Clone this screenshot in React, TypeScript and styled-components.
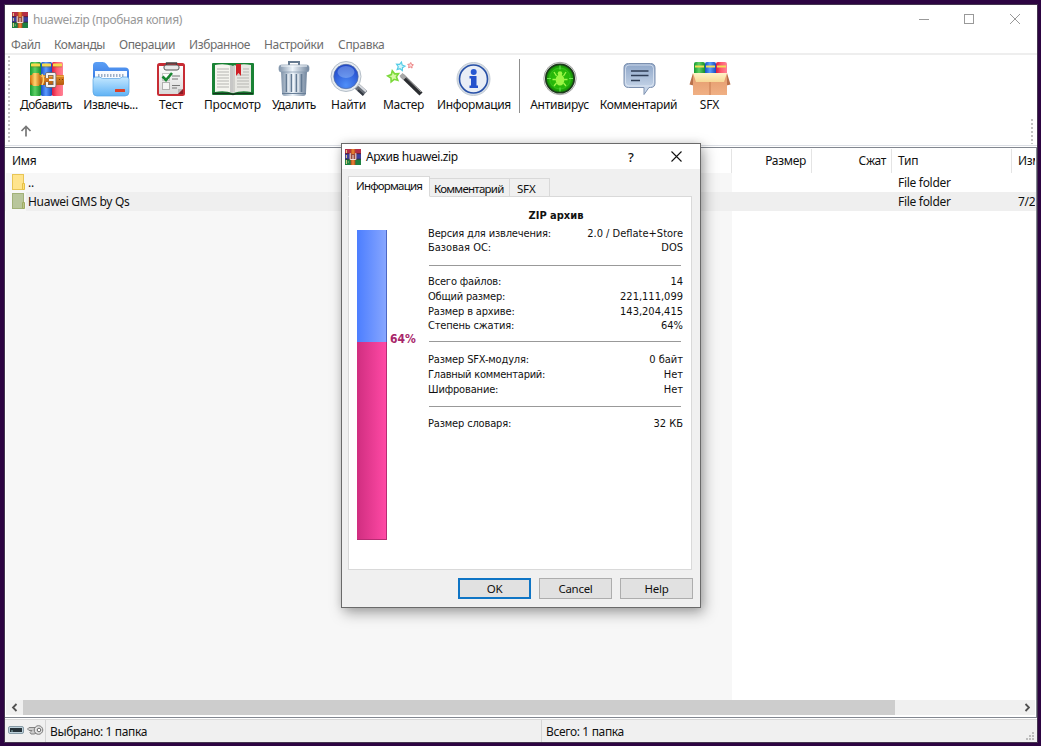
import React from "react";
import styled, { createGlobalStyle } from "styled-components";

const Global = createGlobalStyle`
  * { box-sizing: border-box; }
  html, body { margin: 0; padding: 0; }
  body { background: #2d0442; overflow: hidden; }
  svg { display: block; flex: none; }
`;

const Desktop = styled.div`
  position: relative;
  width: 1041px;
  height: 746px;
  padding: 4px 3px 3px 4px;
  background: #2d0442;
  overflow: hidden;
  font: 12px/16px "Noto Sans", sans-serif;
  color: #111;
`;

const Window = styled.div`
  width: 1034px;
  height: 739px;
  border: 1px solid #43344e;
  background: #fff;
  display: flex;
  flex-direction: column;
  overflow: hidden;
`;

const Text = styled.span<{ $t?: number }>`
  white-space: pre;
  letter-spacing: ${(p) => p.$t ?? 0}px;
`;

const TitleBar = styled.div`
  height: 28px;
  flex: none;
  display: flex;
  align-items: center;
  padding: 1px 16px 0 7px;
  color: #999;
`;

const TitleText = styled(Text)`
  margin-left: 5px;
  flex: 1;
`;

const Controls = styled.div`
  display: flex;
  gap: 35px;
  padding-bottom: 1px;
  & > :last-child { margin-left: -1px; }
`;

const MenuBar = styled.div`
  height: 22px;
  flex: none;
  display: flex;
  padding: 4px 0 0 6px;
  color: #6d6d6d;
  border-bottom: 2px solid #eee;
`;

const MenuItem = styled.div<{ $w: number }>`
  width: ${(p) => p.$w}px;
  line-height: 16px;
`;

const ToolArea = styled.div`
  flex: none;
  height: 91px;
  display: flex;
  border-bottom: 1px solid #dcdfe5;
`;

const Grip = styled.div<{ $top?: number }>`
  width: 2px;
  flex: none;
  margin: ${(p) => p.$top ?? 1}px 4px 1px 3px;
  background: repeating-linear-gradient(#c3c3c3 0 2px, transparent 2px 4px);
`;

const ToolRows = styled.div`
  flex: 1;
  display: flex;
  flex-direction: column;
`;

const Tools = styled.div`
  display: flex;
  height: 63px;
  padding-top: 6px;
`;

const Tool = styled.div<{ $w: number }>`
  width: ${(p) => p.$w}px;
  flex: none;
  display: flex;
  flex-direction: column;
  align-items: center;
  line-height: 16px;
`;

const ToolLabel = styled(Text)`
  margin-top: 0;
`;

const Divider = styled.div`
  width: 1px;
  height: 54px;
  margin: -2px 3px 0;
  background: #8f8f8f;
`;

const PathRow = styled.div`
  padding: 7px 0 0 6px;
`;

const List = styled.div`
  flex: 1;
  display: flex;
  flex-direction: column;
  border: 1px solid #828790;
  border-width: 1px 1px 1px 0;
  margin-top: 1px;
`;

const cols = "727px 80px 80px 120px 1fr";

const ListHead = styled.div`
  display: grid;
  grid-template-columns: ${cols};
  height: 25px;
  overflow: hidden;
  letter-spacing: -0.3px;
`;

const HeadCell = styled.div<{ $right?: boolean; $first?: boolean }>`
  height: 24px;
  margin-top: 1px;
  padding: 4px 5px 0 ${(p) => (p.$first ? 7 : 6)}px;
  text-align: ${(p) => (p.$right ? "right" : "left")};
  border-right: 1px solid #e4e4e4;
  white-space: nowrap;
  overflow: hidden;
  &:last-child { border-right: 0; padding-right: 0; margin-right: 1px; }
`;

const ListBody = styled.div`
  flex: 1;
  background: linear-gradient(90deg, #fff 1px, #f7f7f7 1px 727px, #fff 727px);
  letter-spacing: -0.3px;
`;

const Row = styled.div<{ $selected?: boolean }>`
  display: grid;
  grid-template-columns: ${cols};
  height: 19px;
  line-height: 19px;
  background: ${(p) =>
    p.$selected ? "linear-gradient(90deg, #f7f7f7 21px, #efefef 21px)" : "none"};
`;

const Cell = styled.div<{ $name?: boolean }>`
  display: flex;
  padding-left: ${(p) => (p.$name ? 7 : 6)}px;
  gap: 3px;
  overflow: hidden;
  white-space: nowrap;
  &:last-child { margin-right: 1px; }
`;

const ScrollBar = styled.div`
  height: 15px;
  margin: 0 1px 2px 1px;
  display: flex;
  background: #f0f0f0;
`;

const ScrollButton = styled.div`
  width: 17px;
  display: flex;
  align-items: center;
  justify-content: center;
`;

const Track = styled.div`
  flex: 1;
`;

const Thumb = styled.div`
  width: 872px;
  height: 15px;
  background: #cdcdcd;
`;

const Status = styled.div`
  height: 23px;
  flex: none;
  margin-top: 1px;
  border-top: 1px solid #d9d9d9;
  background: #f0f0f0;
  display: flex;
  align-items: stretch;
`;

const StatusIcons = styled.div`
  width: 41px;
  padding: 3px 0 0 3px;
  border-right: 1px solid #d5d5d5;
  display: flex;
  gap: 3px;
`;

const StatusCell = styled.div<{ $w?: number }>`
  width: ${(p) => (p.$w ? `${p.$w}px` : "auto")};
  flex: ${(p) => (p.$w ? "none" : 1)};
  padding: 4px 0 0 4px;
  border-right: ${(p) => (p.$w ? "1px solid #d5d5d5" : "0")};
`;

const Corner = styled.div`
  align-self: flex-end;
  padding: 0 3px 2px;
`;

const Dialog = styled.div`
  position: absolute;
  left: 341px;
  top: 143px;
  width: 360px;
  height: 465px;
  border: 1px solid #6a6a6a;
  background: #f0f0f0;
  box-shadow: 3px 5px 13px rgba(0, 0, 0, 0.34), 0 0 8px rgba(0, 0, 0, 0.1);
  display: flex;
  flex-direction: column;
`;

const DialogTitle = styled.div`
  height: 25px;
  flex: none;
  background: #fff;
  display: flex;
  align-items: center;
  padding: 0 18px 0 3px;
`;

const Question = styled.span`
  width: 43px;
  font-size: 13px;
  font-weight: 500;
`;

const Tabs = styled.div`
  display: flex;
  align-items: flex-end;
  height: 28px;
  padding-left: 6px;
  position: relative;
  margin-bottom: -1px;
`;

const Tab = styled.div<{ $w: number; $active?: boolean }>`
  width: ${(p) => p.$w}px;
  height: ${(p) => (p.$active ? 21 : 19)}px;
  padding: ${(p) => (p.$active ? 1 : 2)}px 0 0 ${(p) => (p.$active ? 7 : 4)}px;
  border: 1px solid #d9d9d9;
  border-left-width: ${(p) => (p.$active ? 1 : 0)}px;
  border-bottom-color: ${(p) => (p.$active ? "#fff" : "#d9d9d9")};
  background: ${(p) => (p.$active ? "#fff" : "#f0f0f0")};
  font-size: 11.5px;
  line-height: 16px;
`;

const Pane = styled.div`
  width: 344px;
  height: 374px;
  margin-left: 6px;
  border: 1px solid #d9d9d9;
  background: #fff;
  display: flex;
  font: 11px/15px "DejaVu Sans Condensed", "DejaVu Sans", sans-serif;
`;

const Gauge = styled.div`
  width: 30px;
  height: 310px;
  margin: 33px 0 0 8px;
`;

const Saved = styled.div`
  height: 112px;
  background: linear-gradient(90deg, #4c7eff, #87a6ff);
  border-right: 1px solid #4d67c4;
`;

const Packed = styled.div`
  height: 198px;
  background: linear-gradient(90deg, #d02e80, #ff49a5);
  border-right: 1px solid #b72c73;
  border-bottom: 1px solid #b72c73;
`;

const Percent = styled.div`
  width: 42px;
  padding: 135px 0 0 3px;
  color: #a8266a;
  font-weight: bold;
  font-size: 12px;
`;

const Details = styled.div`
  width: 254px;
  padding-top: 11px;
`;

const Heading = styled.div`
  text-align: center;
  font-weight: bold;
  height: 18px;
`;

const Info = styled.div<{ $h?: number }>`
  display: flex;
  justify-content: space-between;
  height: ${(p) => p.$h ?? 15}px;
  line-height: 15px;
  margin-left: -1px;
`;

const Rule = styled.div<{ $before: number; $after: number }>`
  height: 1px;
  width: 252px;
  margin: ${(p) => p.$before}px 0 ${(p) => p.$after}px;
  background: #999;
`;

const Buttons = styled.div`
  display: flex;
  gap: 8px;
  justify-content: flex-end;
  padding: 8px 7px 0 0;
`;

const Button = styled.button<{ $primary?: boolean }>`
  width: 73px;
  height: 21px;
  padding: 0;
  border: ${(p) => (p.$primary ? "2px solid #0f75c5" : "1px solid #adadad")};
  background: #e1e1e1;
  font: 11.5px/15px "Noto Sans", sans-serif;
  letter-spacing: -0.3px;
  color: #111;
`;

const Logo = () => (
  <svg width="16" height="16" viewBox="0 0 17 16" preserveAspectRatio="none">
    <rect x="0" y="0" width="17" height="5" fill="#b52d45" />
    <rect x="0" y="5" width="17" height="5" fill="#3d3f9c" />
    <rect x="0" y="10" width="17" height="6" fill="#1c8141" />
    <path d="M0 4.7h17M0 10.2h17" stroke="#391b39" strokeWidth=".8" />
    <path d="M1.5 1v3M1.5 6v3M1.5 11v4M3 13h1" stroke="#e9d78b" />
    <rect x="6" y="0" width="5" height="16" fill="#b44b22" />
    <rect x="7" y="0" width="3" height="16" fill="#e37a30" />
    <rect x="5" y="5" width="7" height="6" fill="#9a4a3d" />
    <path d="M5.500 4v6.500h6V4M8.500 6v4" stroke="#f4e6e2" fill="none" />
  </svg>
);

const Gradients = () => (
  <svg width="0" height="0">
    <defs>
      {[
        ["green", "#159a31", "#5fd064", "#168d2b"],
        ["blue", "#1750c2", "#5b9bff", "#174bbc"],
        ["red", "#d81a42", "#ff5b70", "#ff8296"],
        ["steel", "#8194aa", "#eef5fb", "#71859d"],
        ["belt", "#d9780e", "#ffd572", "#c8690c"],
      ].map(([id, a, b, c]) => (
        <linearGradient id={id} key={id}>
          <stop offset="0" stopColor={a} /><stop offset=".45" stopColor={b} /><stop offset="1" stopColor={c} />
        </linearGradient>
      ))}
      {[
        ["strap", "#e08a28", "#b55a0d"],
        ["folder", "#c4e8ff", "#5fb2f5"],
        ["back", "#5b9ff5", "#1f5fd6"],
        ["comment", "#8ea6c8", "#d3e0f0"],
        ["paper", "#ffffff", "#d9d9d9"],
        ["box", "#e39a6c", "#f0b084"],
        ["flap", "#fff3c8", "#f7d795"],
      ].map(([id, a, b]) => (
        <linearGradient id={id} key={id} x1="0" y1="0" x2="0" y2="1">
          <stop stopColor={a} /><stop offset="1" stopColor={b} />
        </linearGradient>
      ))}
      <radialGradient id="lens" cx=".5" cy=".85" r=".9">
        <stop stopColor="#4f8ff8" /><stop offset="1" stopColor="#1b3fc4" />
      </radialGradient>
      <radialGradient id="radar">
        <stop stopColor="#2fc40c" /><stop offset=".7" stopColor="#25b508" /><stop offset="1" stopColor="#0f8106" />
      </radialGradient>
    </defs>
  </svg>
);

const Icon = ({ children }: { children: React.ReactNode }) => (
  <svg width="42" height="36" viewBox="0 0 42 36">{children}</svg>
);

const AddIcon = () => (
  <Icon>
    {["green", "blue", "red"].map((c, i) => (
      <g key={c} transform={`translate(${5 + i * 11} 1)`}>
        <rect width="11" height="34" rx="1.5" fill={`url(#${c})`} />
        <rect x="1" y="1.500" width="9" height="3" rx=".5" fill="#f5d94d" />
        <path d="M1 4.900h9" stroke="#7c6a10" strokeOpacity=".6" strokeWidth=".7" />
      </g>
    ))}
    <rect x="5" y="14" width="34" height="10" rx="1" fill="url(#strap)" />
    <path d="M16 15.500h23" stroke="#f1a94b" />
    <path d="M8 12h6q3 6.500 0 13H8q-5-6.500 0-13z" fill="url(#belt)" />
    <path d="M17 13q3 5.500 0 11" fill="none" stroke="#ffd26d" strokeWidth="1.500" />
    <path d="M22 17v-4h7.500v12H22v-4" fill="none" stroke="#6f6a66" strokeWidth="3.600" strokeLinejoin="round" />
    <path d="M22 17v-4h7.500v12H22v-4M24 19h5" fill="none" stroke="#f4f1ee" strokeWidth="2" strokeLinejoin="round" />
    <path d="M34 18.500h1M37 18.500h1" stroke="#6e3b0c" />
  </Icon>
);

const ExtractIcon = () => (
  <Icon>
    <path d="M3 30V4.500q0-3.500 3.500-3.500h6q2.500 0 4 2l2.500 3.500h16q4 0 4 4V30z" fill="url(#back)" />
    <path d="M5 10h32v9H5z" fill="#f8fbff" />
    <path d="M8 14.500h27" stroke="#9fb0c6" strokeWidth="3" strokeDasharray="1.500 1.500" />
    <path d="M3 18.500q0-2.500 2.500-2.500h4l3 1.500h17l3-1.500h4q2.500 0 2.500 2.500V31q0 4-4 4H7q-4 0-4-4z" fill="url(#folder)" stroke="#58a4e3" strokeWidth=".7" />
    <rect x="25" y="28" width="10" height="3" rx=".5" fill="#dc4128" />
  </Icon>
);

const TestIcon = () => (
  <Icon>
    <rect x="7" y="2" width="28" height="33" rx="2.5" fill="#c72c34" />
    <path d="M9 5h24v23l-5 5H9z" fill="url(#paper)" />
    <path d="M33 28h-5v5z" fill="#b9b9b9" /><path d="M33 28v5h-5z" fill="#8b1d27" />
    <rect x="14" y="4" width="15" height="5" rx="2" fill="#e9e9e9" stroke="#555" />
    <path d="M16.500 4V2h10v2" fill="none" stroke="#444" strokeWidth="1.300" />
    <rect x="12.5" y="12.5" width="7" height="7" fill="#fff" stroke="#c5c5c5" />
    <rect x="12.5" y="21.5" width="7" height="7" fill="#f5f5f5" stroke="#b0b0b0" />
    <path d="M12.500 15.500l3.500 3.500 6-7" stroke="#198632" strokeWidth="2.600" fill="none" />
    <path d="M22 15h8M22 18h6M22 24.5h8M22 27h5" stroke="#777" />
  </Icon>
);

const ViewIcon = () => (
  <Icon>
    <rect x="0" y="2" width="42" height="32" rx="1" fill="#198234" />
    <path d="M1 32.500h17l3 1 3-1h17" stroke="#16351e" strokeWidth="1.500" fill="none" />
    <path d="M3 4q9-2 18 1v27q-9-3-18-1z" fill="#f5f5ef" />
    <path d="M39 4q-9-2-18 1v27q9-3 18-1z" fill="#e8e8e3" />
    <path d="M18 4l3 1v27l-3-1z" fill="#bbb" opacity=".8" /><path d="M21 5l2-1v27l-2 1z" fill="#cfcfcb" />
    <path d="M5 8h12M5 11h12M5 14h12M5 17h12M5 20h12M5 23h12M5 26h12M31 8h6M31 11h6M25 14h12M25 17h12M25 20h12M25 23h12M25 26h12" stroke="#b5b5b1" />
    <path d="M24 3h5v12l-2.5-3-2.5 3z" fill="#ce2026" />
  </Icon>
);

const DeleteIcon = () => (
  <Icon>
    <path d="M16 4V1h10v3" stroke="#667b91" strokeWidth="2" fill="none" />
    <path d="M8 10h26l-1 22q0 3-3 3H12q-3 0-3-3z" fill="url(#steel)" />
    <path d="M13.5 13v18M18.5 13v18M23.5 13v18M28.5 13v18" stroke="#637a93" strokeWidth="1.700" />
    <path d="M15 13v18M20 13v18M25 13v18" stroke="#f7fbff" />
    <rect x="6" y="4" width="30" height="7" rx="2.5" fill="url(#steel)" stroke="#8397ac" strokeWidth=".7" />
    <path d="M8 5h26" stroke="#f6fafd" /><path d="M9 32.5h24" stroke="#687f98" />
  </Icon>
);

const FindIcon = () => (
  <Icon>
    <path d="M27 23.500l10 9" stroke="#686e77" strokeWidth="6.500" />
    <path d="M29 22.500l9 8" stroke="#d8dce2" strokeWidth="2" />
    <path d="M30 29l5.500 5" stroke="#343a43" strokeWidth="2" />
    <circle cx="18" cy="15.500" r="15" fill="#e6ebf0" stroke="#b4bec8" />
    <circle cx="18" cy="15.500" r="12.200" fill="url(#lens)" stroke="#536d9d" strokeWidth=".7" />
    <ellipse cx="18" cy="11" rx="8.500" ry="6" fill="#bdd9ff" opacity=".35" />
  </Icon>
);

const star = (cx: number, cy: number, r: number, turn: number) =>
  Array.from({ length: 10 }, (_, i) => {
    const a = ((i * 36 + turn - 90) * Math.PI) / 180;
    const q = i % 2 ? r * 0.5 : r;
    return `${(cx + q * Math.cos(a)).toFixed(2)},${(cy + q * Math.sin(a)).toFixed(2)}`;
  }).join(" ");

const WizardIcon = () => (
  <Icon>
    <path d="M19 14.500L38 33" stroke="#2b2d31" strokeWidth="4.500" />
    <path d="M19.500 13L38 31" stroke="#9a9a9a" />
    <path d="M18 13.500l4 4" stroke="#a8a8a8" strokeWidth="4.500" />
    <polygon points={star(17.500, 5.500, 4.500, 12)} fill="#d4f6fb" stroke="#55cce6" strokeWidth="1.200" />
    <polygon points={star(10.500, 15.500, 5.800, -12)} fill="#d6f9a5" stroke="#7bd93a" strokeWidth="1.600" />
    <polygon points={star(27.500, 4.500, 3, 5)} fill="#ffd9d9" stroke="#ec8686" />
  </Icon>
);

const InfoIcon = () => (
  <Icon>
    <circle cx="20.5" cy="18" r="16.5" fill="#d7dee6" stroke="#c3ccd5" />
    <circle cx="20.5" cy="18" r="14" fill="#e9eef6" stroke="#2750a7" strokeWidth="1.600" />
    <circle cx="20.7" cy="11" r="3" fill="#2859d2" />
    <path d="M16.5 15h7v9.5H25V27h-8.500v-2.500h1.500v-7h-1.500z" fill="#2552cc" />
  </Icon>
);

const VirusIcon = () => (
  <Icon>
    <circle cx="21" cy="17.500" r="16.200" fill="#ededed" stroke="#a5a5a5" />
    <circle cx="21" cy="17.500" r="14.200" fill="url(#radar)" stroke="#1c3a1b" strokeWidth="1.700" />
    <circle cx="21" cy="17.500" r="10.500" fill="none" stroke="#52da3a" strokeOpacity=".45" strokeWidth=".8" />
    <path d="M21 4.500v4M21 26.500v4M8 17.500h4M30 17.500h4" stroke="#6de653" />
    <path d="M15 11l2.500 4M27 11l-2.500 4M13.500 18.500h4M28.500 18.500h-4M15 25l2.500-3M27 25l-2.500-3" stroke="#9df748" strokeWidth="1.300" />
    <ellipse cx="21" cy="19" rx="4.300" ry="5.500" fill="#9bf545" /><circle cx="21" cy="12.500" r="2.300" fill="#9bf545" />
  </Icon>
);

const CommentIcon = () => (
  <Icon>
    <path d="M10.500 2.500h22q4.500 0 4.500 4.500v15q0 4.500-4.500 4.500H31l-5 7v-7H10.500Q6 26.500 6 22V7q0-4.500 4.500-4.500z" fill="url(#comment)" stroke="#7c90af" />
    <rect x="7.500" y="4" width="28" height="21" rx="3.500" fill="none" stroke="#eef4fc" strokeOpacity=".6" />
    <path d="M13 10h17.500M13 14.500h17.500M13 19.500h9" stroke="#2f3e56" strokeWidth="1.500" />
  </Icon>
);

const SfxIcon = () => (
  <Icon>
    {["green", "blue", "red"].map((c, i) => (
      <g key={c} transform={`translate(${5 + i * 11} 1)`}>
        <rect width="11" height="13" rx="2" fill={`url(#${c})`} />
        <rect x="1" y="3.500" width="9" height="2" fill="#f1dd55" />
      </g>
    ))}
    <path d="M4 12L.5 23.500l4 1zM38 12l3.500 11.500-4 1z" fill="#b9714b" />
    <path d="M4 13h34v21H4z" fill="url(#box)" />
    <path d="M4 12h34l-3 9H7z" fill="url(#flap)" />
    <path d="M21 21v13" stroke="#c67b50" />
  </Icon>
);

const tools: [string, number, number, React.FC][] = [
  ["Добавить", 64, -0.5, AddIcon],
  ["Извлечь...", 65, -0.4, ExtractIcon],
  ["Тест", 56, -0.1, TestIcon],
  ["Просмотр", 67, -0.15, ViewIcon],
  ["Удалить", 56, -0.4, DeleteIcon],
  ["Найти", 53, -0.25, FindIcon],
  ["Мастер", 57, -0.3, WizardIcon],
  ["Информация", 84, -0.35, InfoIcon],
  ["", 7, 0, Divider],
  ["Антивирус", 73, -0.25, VirusIcon],
  ["Комментарий", 85, -0.35, CommentIcon],
  ["SFX", 57, -0.1, SfxIcon],
];

const menus: [string, number, number][] = [
  ["Файл", 43, -0.4],
  ["Команды", 65, -0.45],
  ["Операции", 70, -0.4],
  ["Избранное", 75, -0.4],
  ["Настройки", 74, -0.35],
  ["Справка", 60, -0.3],
];

const Folder = ({ selected }: { selected?: boolean }) => (
  <svg width="13" height="17" viewBox="0 0 13 17">
    <rect x=".5" y="1.500" width="11" height="15" fill={selected ? "#b9c69c" : "#ffe48d"} stroke={selected ? "#a2b178" : "#e8c555"} />
    <path d="M10.500 10.500h2v6h-2z" fill={selected ? "#bac58a" : "#ffe17a"} stroke={selected ? "#a0ac62" : "#e5bf43"} />
  </svg>
);

const Line = ({ k, v, h, kt }: { k: string; v: string; h?: number; kt?: number }) => (
  <Info $h={h}><Text $t={kt ?? -0.16}>{k}</Text><Text>{v}</Text></Info>
);

export default function App() {
  return (
    <Desktop>
      <Global />
      <Window>
        <TitleBar>
          <Logo />
          <TitleText $t={-0.36}>huawei.zip (пробная копия)</TitleText>
          <Controls>
            <svg width="10" height="12"><path d="M0 6.5h10" stroke="#999" /></svg>
            <svg width="11" height="12"><rect x=".5" y="1.5" width="9" height="9" fill="none" stroke="#999" /></svg>
            <svg width="12" height="12"><path d="M1 1l10 10M11 1L1 11" stroke="#999" /></svg>
          </Controls>
        </TitleBar>
        <MenuBar>
          {menus.map(([name, w, t]) => (
            <MenuItem key={name} $w={w}><Text $t={t}>{name}</Text></MenuItem>
          ))}
        </MenuBar>
        <ToolArea>
          <Grip />
          <ToolRows>
            <Tools>
              {tools.map(([name, w, t, Pic], i) =>
                name ? (
                  <Tool key={i} $w={w}><Pic /><ToolLabel $t={t}>{name}</ToolLabel></Tool>
                ) : (
                  <Divider key={i} />
                )
              )}
            </Tools>
            <PathRow>
              <svg width="12" height="12"><path d="M6 11.500V1.500M1.500 6L6 1.500 10.500 6" stroke="#777" strokeWidth="1.700" fill="none" /></svg>
            </PathRow>
          </ToolRows>
          <Grip $top={64} />
        </ToolArea>
        <List>
          <ListHead>
            <HeadCell $first>Имя</HeadCell>
            <HeadCell $right>Размер</HeadCell>
            <HeadCell $right>Сжат</HeadCell>
            <HeadCell>Тип</HeadCell>
            <HeadCell>Изм</HeadCell>
          </ListHead>
          <ListBody>
            <Row>
              <Cell $name><Folder />..</Cell><Cell /><Cell /><Cell>File folder</Cell><Cell />
            </Row>
            <Row $selected>
              <Cell $name><Folder selected />Huawei GMS by Qs</Cell><Cell /><Cell /><Cell>File folder</Cell><Cell>7/24</Cell>
            </Row>
          </ListBody>
          <ScrollBar>
            <ScrollButton><svg width="7" height="9"><path d="M5.500 1L2 4.500l3.500 3.500" stroke="#505050" strokeWidth="1.800" fill="none" /></svg></ScrollButton>
            <Track><Thumb /></Track>
            <ScrollButton><svg width="7" height="9"><path d="M2.500 1L6 4.500 2.500 8" stroke="#505050" strokeWidth="1.800" fill="none" /></svg></ScrollButton>
          </ScrollBar>
        </List>
        <Status>
          <StatusIcons>
            <svg width="16" height="16"><rect x=".5" y="3.500" width="15" height="7" rx="1.500" fill="#bed1db" stroke="#879ba6" /><rect x="2" y="5" width="12" height="4" fill="#27333a" /><path d="M3 8h2" stroke="#8db5b6" /></svg>
            <svg width="17" height="16"><path d="M9 4.500H2L.5 6 2 7.500h3L3 9.500 4 11h3l3-1" fill="#ccc" stroke="#828282" /><circle cx="11.500" cy="7" r="4.300" fill="#e3e3e3" stroke="#777" /><circle cx="12" cy="7" r="1.800" fill="#fff" stroke="#666" /></svg>
          </StatusIcons>
          <StatusCell $w={496}><Text $t={-0.37}>Выбрано: 1 папка</Text></StatusCell>
          <StatusCell><Text $t={-0.35}>Всего: 1 папка</Text></StatusCell>
          <Corner>
            <svg width="8" height="8"><path d="M6 0h2v2H6zM3 3h2v2H3zM6 3h2v2H6zM0 6h2v2H0zM3 6h2v2H3zM6 6h2v2H6z" fill="#bcbcbc" /></svg>
          </Corner>
        </Status>
      </Window>
      <Gradients />
      <Dialog>
        <DialogTitle>
          <Logo />
          <TitleText $t={-0.42}>Архив huawei.zip</TitleText>
          <Question>?</Question>
          <svg width="11" height="11"><path d="M.5 .5l10 10M10.500 .5l-10 10" stroke="#111" strokeWidth="1.100" /></svg>
        </DialogTitle>
        <Tabs>
          <Tab $w={82} $active><Text $t={-0.8}>Информация</Text></Tab>
          <Tab $w={80}><Text $t={-0.75}>Комментарий</Text></Tab>
          <Tab $w={40}><Text $t={-0.1}>{" SFX"}</Text></Tab>
        </Tabs>
        <Pane>
          <Gauge><Saved /><Packed /></Gauge>
          <Percent>64%</Percent>
          <Details>
            <Heading>ZIP архив</Heading>
            <Line k="Версия для извлечения:" v="2.0 / Deflate+Store" h={14} />
            <Line k="Базовая ОС:" v="DOS" kt={0} />
            <Rule $before={10} $after={8} />
            <Line k="Всего файлов:" v="14" />
            <Line k="Общий размер:" v="221,111,099" kt={-0.22} />
            <Line k="Размер в архиве:" v="143,204,415" h={14} />
            <Line k="Степень сжатия:" v="64%" />
            <Rule $before={8} $after={10} />
            <Line k="Размер SFX-модуля:" v="0 байт" />
            <Line k="Главный комментарий:" v="Нет" kt={-0.24} />
            <Line k="Шифрование:" v="Нет" />
            <Rule $before={9} $after={9} />
            <Line k="Размер словаря:" v="32 КБ" />
          </Details>
        </Pane>
        <Buttons>
          <Button $primary>OK</Button>
          <Button>Cancel</Button>
          <Button>Help</Button>
        </Buttons>
      </Dialog>
    </Desktop>
  );
}
